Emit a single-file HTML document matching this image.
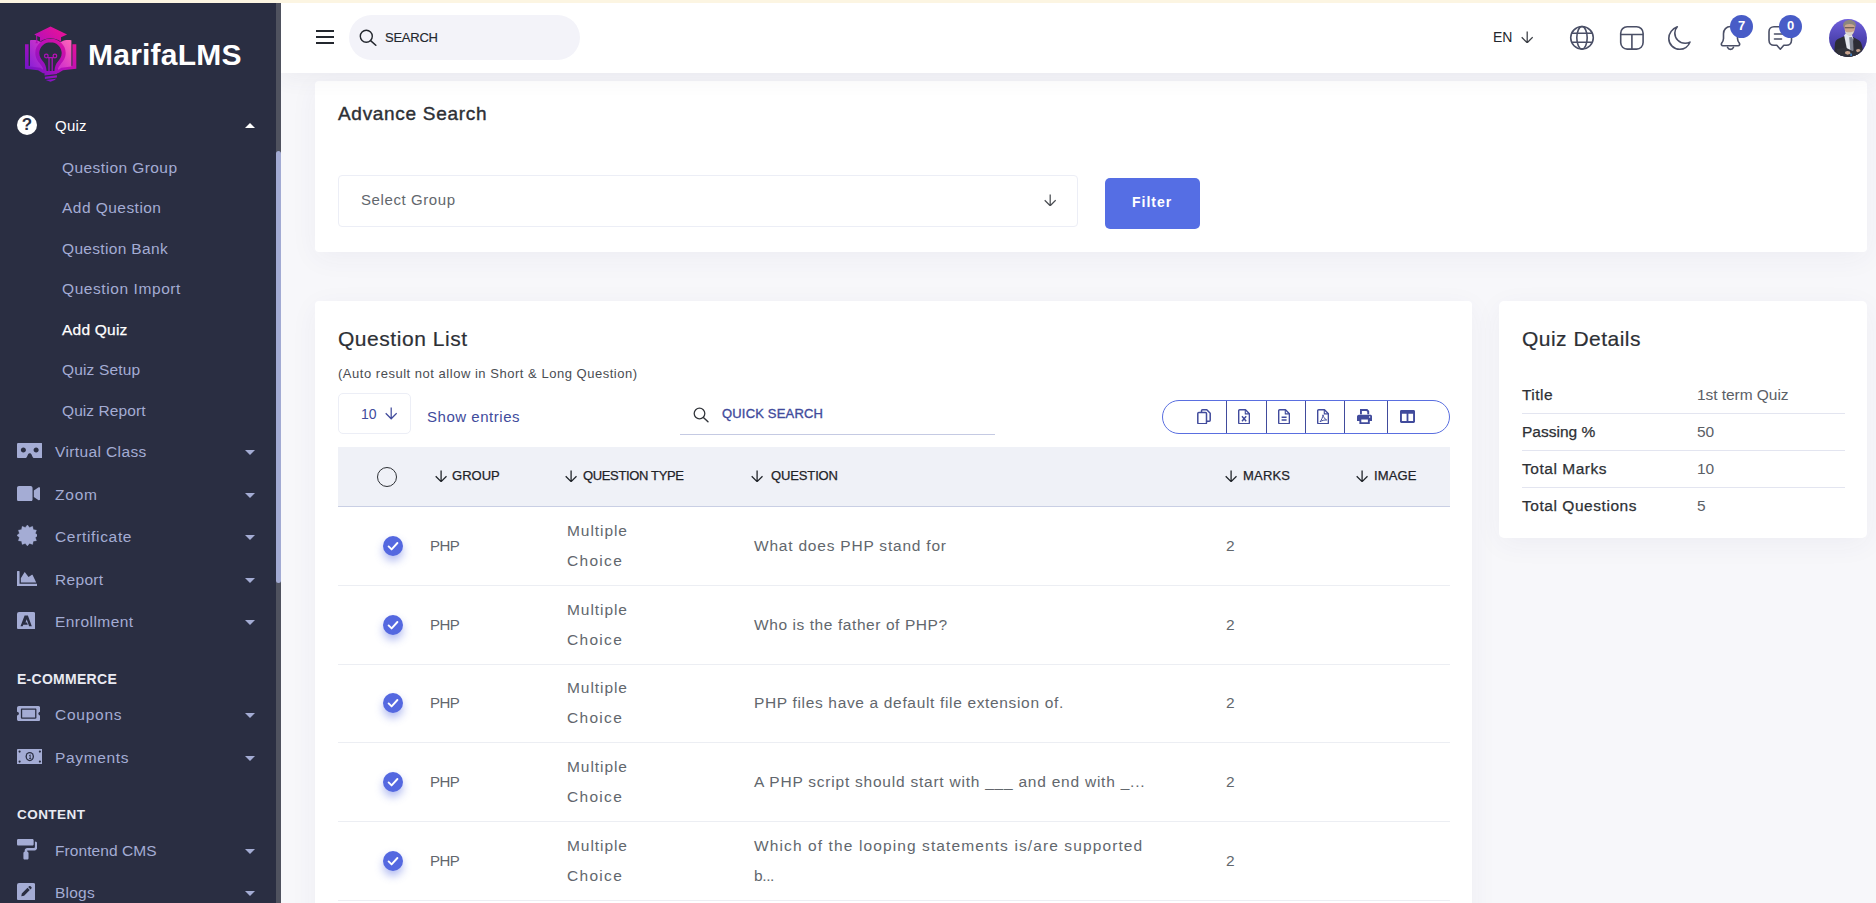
<!DOCTYPE html>
<html lang="en"><head><meta charset="utf-8"><title>Add Quiz</title>
<style>
*{box-sizing:border-box;margin:0;padding:0}
html,body{width:1876px;height:903px;overflow:hidden}
body{font-family:"Liberation Sans",sans-serif;background:#f7f7fa;color:#2d3035;position:relative}
.abs{position:absolute}
.t{position:absolute;white-space:nowrap;line-height:1}
#strip{left:0;top:0;width:1876px;height:3px;background:#fcf5e2;z-index:9}
#side{left:0;top:3px;width:276px;height:900px;background:#2a2e42;z-index:7}
#sbtrack,#sbthumb{z-index:7}
#sidebar{position:absolute;left:0;top:0;z-index:8}
#sbtrack{left:276px;top:3px;width:5px;height:900px;background:#4f525f}
#sbthumb{left:276px;top:151px;width:5px;height:432px;background:#a2aad3;border-radius:3px}
#top{left:281px;top:3px;width:1595px;height:70px;background:#fff;z-index:5;box-shadow:0 6px 20px rgba(60,60,95,.06)}
#topbar{position:absolute;left:0;top:0;z-index:6}
#topshadow{display:none}
.side-t{color:#a4acd4;font-size:15.5px}
.caret{position:absolute;width:0;height:0;border-left:5px solid transparent;border-right:5px solid transparent;border-top:5px solid #a4acd4;left:245px}
.card{position:absolute;background:#fff;border-radius:4px;box-shadow:0 6px 28px rgba(60,60,110,.05)}
.lt{color:#62676d}
.rt{font-size:15.5px}
.row-sep{position:absolute;left:338px;width:1112px;height:1px;background:#eceef3}
.chk{position:absolute;left:383px;width:20px;height:20px;border-radius:50%;background:#5468e0;box-shadow:0 5px 9px rgba(84,104,224,.45)}
.th{font-size:13px;color:#1f2328;-webkit-text-stroke:0.25px #1f2328}
.qd-l{font-size:15.5px;color:#2d3035;-webkit-text-stroke:0.25px #2d3035;left:1522px}
.qd-v{font-size:15.5px;color:#5b6066;left:1697px}
.qd-sep{position:absolute;left:1522px;width:323px;height:1px;background:#e3e5f0}
</style><style id="fit">
#brand{letter-spacing:0.23px}
#s-quiz{letter-spacing:0.22px}
#s1{letter-spacing:0.43px}
#s2{letter-spacing:0.46px}
#s3{letter-spacing:0.33px}
#s4{letter-spacing:0.58px}
#s5{letter-spacing:0.23px}
#s6{letter-spacing:0.15px}
#s7{letter-spacing:0.08px}
#m1{letter-spacing:0.38px}
#m2{letter-spacing:0.79px}
#m3{letter-spacing:0.67px}
#m4{letter-spacing:0.33px}
#m5{letter-spacing:0.45px}
#h1{letter-spacing:0.28px}
#m6{letter-spacing:0.74px}
#m7{letter-spacing:0.65px}
#h2{letter-spacing:0.45px}
#m8{letter-spacing:0.08px}
#m9{letter-spacing:0.23px}
#tsearch{letter-spacing:-0.24px}
#ten{letter-spacing:0px}
#adv{letter-spacing:0.7px}
#selg{letter-spacing:0.59px}
#filt{letter-spacing:1.07px}
#ql{letter-spacing:0.54px}
#auto{letter-spacing:0.52px}
#ten10{letter-spacing:0px}
#showe{letter-spacing:0.53px}
#qs{letter-spacing:0.18px}
#th1{letter-spacing:0.02px}
#th2{letter-spacing:-0.35px}
#th3{letter-spacing:-0.13px}
#th4{letter-spacing:0.19px}
#th5{letter-spacing:0.15px}
#qd{letter-spacing:0.48px}
#ql1{letter-spacing:0.47px}
#ql2{letter-spacing:-0.0px}
#ql3{letter-spacing:0.53px}
#ql4{letter-spacing:0.55px}
#qv1{letter-spacing:-0.05px}
#qv2{letter-spacing:0px}
#qv3{letter-spacing:0px}
#qv4{letter-spacing:0px}
#r1q{letter-spacing:0.79px}
#r2q{letter-spacing:0.58px}
#r3q{letter-spacing:0.66px}
#r4q{letter-spacing:0.77px}
#r5q{letter-spacing:1.11px}
#r5q2{letter-spacing:-0.38px}
#r1g{letter-spacing:-0.6px}
#r1t1{letter-spacing:0.94px}
#r1t2{letter-spacing:1.3px}
#r1m{letter-spacing:0px}
#r2g{letter-spacing:-0.6px}
#r2t1{letter-spacing:0.94px}
#r2t2{letter-spacing:1.3px}
#r2m{letter-spacing:0px}
#r3g{letter-spacing:-0.6px}
#r3t1{letter-spacing:0.94px}
#r3t2{letter-spacing:1.3px}
#r3m{letter-spacing:0px}
#r4g{letter-spacing:-0.6px}
#r4t1{letter-spacing:0.94px}
#r4t2{letter-spacing:1.3px}
#r4m{letter-spacing:0px}
#r5g{letter-spacing:-0.6px}
#r5t1{letter-spacing:0.94px}
#r5t2{letter-spacing:1.3px}
#r5m{letter-spacing:0px}
</style></head><body>
<div id="strip" class="abs"></div>
<div id="side" class="abs"></div>
<div id="sbtrack" class="abs"></div>
<div id="sbthumb" class="abs"></div>
<div id="top" class="abs"></div>
<div id="topshadow" class="abs"></div>

<!-- SIDEBAR -->
<div id="sidebar">
<!--LOGO-->
<svg class="abs" style="left:24px;top:25px" width="54" height="58" viewBox="24 25 54 58" ><defs><linearGradient id="lg" gradientUnits="userSpaceOnUse" x1="28" y1="74" x2="72" y2="30"><stop offset="0" stop-color="#6f14c9"/><stop offset="0.5" stop-color="#b80fb8"/><stop offset="1" stop-color="#f5138f"/></linearGradient>
<linearGradient id="lg2" gradientUnits="userSpaceOnUse" x1="30" y1="68" x2="70" y2="38"><stop offset="0" stop-color="#8a1fd6"/><stop offset="0.55" stop-color="#d738c8"/><stop offset="1" stop-color="#ff66b8"/></linearGradient></defs>
<path fill="url(#lg)" d="M25 44.300h3.600v21.500l11 1.300 5 3h11.800l5-3 11-1.300V44.300H76.300v24.500L63 70.300l-5 3H43l-5-3-13-1.500z"/>
<path fill="url(#lg2)" d="M30 40.300c3.500-.6 7-.3 9.500 1.200l4 1.500v27l-3.500-2.200-10-1.300zM71.400 40.300c-3.500-.6-7-.3-9.500 1.200l-4 1.500v27l3.500-2.200 10-1.300z"/>
<path fill="url(#lg)" d="M34.200 34.400L50.500 26.600 67.100 34.400 61 37.300v4.500c-2.800-2.300-6.400-3.600-10.500-3.600s-7.700 1.300-10.500 3.600v-4.500l-2.800-1.300v5.300l.9 2h-2.800l.9-2v-5.800z"/>
<path fill="url(#lg)" d="M50.500 38.500c-8.300 0-15.200 6.500-15.200 14.500 0 5.200 2.700 8.300 5 11.200 1.900 2.400 3.200 4.500 3.500 7.800h13.400c.3-3.300 1.600-5.400 3.500-7.800 2.300-2.900 5-6 5-11.200 0-8-6.900-14.500-15.200-14.500z"/>
<path fill="#2a2e42" d="M50.500 42.200c-6.200 0-11.200 4.900-11.200 10.900 0 3.900 2.200 6.400 4 8.700 1.600 2 2.900 4.500 3.300 9.200h7.800c.4-4.700 1.700-7.200 3.300-9.200 1.800-2.300 4-4.800 4-8.700 0-6-5-10.900-11.200-10.900z"/>
<g fill="none" stroke="url(#lg)" stroke-width="1.250"><circle cx="46.300" cy="56" r="1.800"/><circle cx="54.900" cy="56" r="1.800"/><path d="M47.500 57.600h6.200M49 57.600V71.500M52.200 57.600V71.500"/></g>
<path fill="url(#lg)" d="M44.500 72h12.400v2.100l-12.400 1.500zM44.900 76.700l12-1.500v2.300l-12 1.500zM45.800 80l10.300-1.300-1.300 1.300-4.300 1.800-3.500-1.300z"/></svg>
<!--/LOGO-->
<span class="t" id="brand" style="left:88px;top:40px;font-size:30px;font-weight:bold;color:#fff">MarifaLMS</span>
<span class="t" id="s-quiz" style="left:55px;top:118px;font-size:15px;color:#fff">Quiz</span>
<span class="t side-t" id="s1" style="left:62px;top:160px">Question Group</span>
<span class="t side-t" id="s2" style="left:62px;top:200px">Add Question</span>
<span class="t side-t" id="s3" style="left:62px;top:241px">Question Bank</span>
<span class="t side-t" id="s4" style="left:62px;top:281px">Question Import</span>
<span class="t side-t" id="s5" style="left:62px;top:322px;color:#fff;-webkit-text-stroke:0.25px #fff">Add Quiz</span>
<span class="t side-t" id="s6" style="left:62px;top:362px">Quiz Setup</span>
<span class="t side-t" id="s7" style="left:62px;top:403px">Quiz Report</span>
<span class="t side-t" id="m1" style="left:55px;top:444px">Virtual Class</span>
<span class="t side-t" id="m2" style="left:55px;top:487px">Zoom</span>
<span class="t side-t" id="m3" style="left:55px;top:529px">Certificate</span>
<span class="t side-t" id="m4" style="left:55px;top:572px">Report</span>
<span class="t side-t" id="m5" style="left:55px;top:614px">Enrollment</span>
<span class="t" id="h1" style="left:17px;top:672px;font-size:14px;font-weight:bold;color:#e9eaf2">E-COMMERCE</span>
<span class="t side-t" id="m6" style="left:55px;top:707px">Coupons</span>
<span class="t side-t" id="m7" style="left:55px;top:750px">Payments</span>
<span class="t" id="h2" style="left:17px;top:808px;font-size:13.5px;font-weight:bold;color:#e9eaf2">CONTENT</span>
<span class="t side-t" id="m8" style="left:55px;top:843px">Frontend CMS</span>
<span class="t side-t" id="m9" style="left:55px;top:885px">Blogs</span>
<i class="caret" style="top:123px;border-top:0;border-bottom:5px solid #fff"></i>
<i class="caret" style="top:450px"></i>
<i class="caret" style="top:493px"></i>
<i class="caret" style="top:535px"></i>
<i class="caret" style="top:578px"></i>
<i class="caret" style="top:620px"></i>
<i class="caret" style="top:713px"></i>
<i class="caret" style="top:756px"></i>
<i class="caret" style="top:849px"></i>
<i class="caret" style="top:891px"></i>
<!--SIDEICONS-->
<div class="abs" style="left:17px;top:114.5px;width:20px;height:20px;border-radius:50%;background:#fff"></div><span class="t" style="left:17px;top:116px;width:20px;text-align:center;font-size:17px;font-weight:bold;color:#2a2e42">?</span>
<svg class="abs" style="left:16.75px;top:443px" width="25.5" height="15.3" viewBox="0 64 640 384" preserveAspectRatio="none"><path fill="#a4acd4" d="M608 64H32C14.33 64 0 78.33 0 96v320c0 17.67 14.33 32 32 32h160.22c25.19 0 48.03-14.77 58.36-37.74l27.74-61.64C286.21 331.08 302.35 320 320 320s33.79 11.08 41.68 28.62l27.74 61.64C399.75 433.23 422.6 448 447.78 448H608c17.67 0 32-14.33 32-32V96c0-17.67-14.33-32-32-32zM160 304c-35.35 0-64-28.650-64-64s28.650-64 64-64 64 28.650 64 64-28.650 64-64 64zm320 0c-35.35 0-64-28.650-64-64s28.650-64 64-64 64 28.650 64 64-28.650 64-64 64z"/></svg>
<svg class="abs" style="left:16.75px;top:485.5px" width="23.3" height="15.5" viewBox="0 64 576 384" preserveAspectRatio="none"><path fill="#a4acd4" d="M336.2 64H47.8C21.4 64 0 85.4 0 111.8v288.4C0 426.6 21.4 448 47.8 448h288.4c26.4 0 47.8-21.4 47.8-47.8V111.8c0-26.4-21.4-47.8-47.8-47.8zm189.4 37.7L416 177.3v157.4l109.600 75.500c21.2 14.6 50.4-.3 50.4-25.8V127.5c0-25.4-29.1-40.4-50.4-25.8z"/></svg>
<svg class="abs" style="left:16.7px;top:525.1px" width="20.8" height="20.8" viewBox="0 0 20.8 20.8" ><polygon fill="#a4acd4" stroke="#a4acd4" stroke-width="0.3" stroke-linejoin="round" points="10.40,-0.10 12.55,2.38 15.65,1.31 16.27,4.53 19.49,5.15 18.42,8.25 20.90,10.40 18.42,12.55 19.49,15.65 16.27,16.27 15.65,19.49 12.55,18.42 10.40,20.90 8.25,18.42 5.15,19.49 4.53,16.27 1.31,15.65 2.38,12.55 -0.10,10.40 2.38,8.25 1.31,5.15 4.53,4.53 5.15,1.31 8.25,2.38"/></svg>
<svg class="abs" style="left:16.75px;top:570.8px" width="20.5" height="15.4" viewBox="0 64 512 384" preserveAspectRatio="none"><path fill="#a4acd4" d="M500 384c6.6 0 12 5.4 12 12v40c0 6.6-5.4 12-12 12H12c-6.6 0-12-5.4-12-12V76c0-6.600 5.400-12 12-12h40c6.6 0 12 5.4 12 12v308h436zM372.7 159.5L288 216l-85.3-113.7c-5.1-6.8-15.5-6.3-19.9 1L96 248v104h384l-89.900-187.800c-3.2-6.5-11.4-8.7-17.4-4.7z"/></svg>
<svg class="abs" style="left:16.75px;top:611.7px" width="18.3" height="17.4" viewBox="0 0 18.3 17.4" ><rect width="18.3" height="17.4" rx="2" fill="#a4acd4"/><path fill="#2a2e42" d="M7.6 3.6h3.3l3.9 10.6h-2.7l-2.4-6.9-1.2 3.3h1.5l.8 2.1H6.300l-.6 1.5H3.500z"/></svg>
<svg class="abs" style="left:16.75px;top:706px" width="23.3" height="15.2" viewBox="0 64 576 384" preserveAspectRatio="none"><path fill="#a4acd4" d="M128 160h320v192H128V160zm400 96c0 26.51 21.49 48 48 48v96c0 26.51-21.49 48-48 48H48c-26.51 0-48-21.49-48-48v-96c26.51 0 48-21.49 48-48s-21.49-48-48-48v-96c0-26.51 21.49-48 48-48h480c26.51 0 48 21.49 48 48v96c-26.51 0-48 21.49-48 48zm-48-104c0-13.255-10.745-24-24-24H120c-13.255 0-24 10.745-24 24v208c0 13.255 10.745 24 24 24h336c13.255 0 24-10.745 24-24V152z"/></svg>
<svg class="abs" style="left:16.75px;top:749px" width="25.5" height="15.2" viewBox="0 0 25.5 15.2" ><rect width="25.5" height="15.2" rx="0.8" fill="#a4acd4"/><circle cx="2.6" cy="2.6" r="1.1" fill="#2a2e42"/><circle cx="22.9" cy="2.6" r="1.1" fill="#2a2e42"/><circle cx="2.6" cy="12.6" r="1.1" fill="#2a2e42"/><circle cx="22.9" cy="12.6" r="1.1" fill="#2a2e42"/><ellipse cx="12.75" cy="7.6" rx="4.2" ry="4.6" fill="#2a2e42"/><ellipse cx="12.75" cy="7.6" rx="2.9" ry="3.3" fill="#a4acd4"/><path d="M12.1 6.3l1-.7h.5v3.600h.7v.8h-2.300v-.8h.7V6.700l-.6.300z" fill="#2a2e42"/></svg>
<svg class="abs" style="left:16.75px;top:839.2px" width="20.5" height="20.6" viewBox="0 0 512 512" preserveAspectRatio="none"><path fill="#a4acd4" d="M416 128V32c0-17.67-14.33-32-32-32H32C14.33 0 0 14.33 0 32v96c0 17.67 14.33 32 32 32h352c17.67 0 32-14.33 32-32zm32-64v128c0 17.67-14.33 32-32 32H256c-35.35 0-64 28.650-64 64v32c-17.67 0-32 14.33-32 32v128c0 17.67 14.33 32 32 32h64c17.67 0 32-14.33 32-32V352c0-17.67-14.33-32-32-32v-32h160c53.02 0 96-42.98 96-96v-64c0-35.35-28.650-64-64-64z"/></svg>
<svg class="abs" style="left:16.7px;top:882.8px" width="18.3" height="17.4" viewBox="0 0 18.3 17.4" ><rect width="18.3" height="17.4" rx="2" fill="#a4acd4"/><path fill="#2a2e42" d="M4.300 13.300l.5-2.800 5.700-5.700 2.300 2.300-5.700 5.700zM11.200 4.100l.9-.9c.4-.4 1-.4 1.400 0l.9.900c.4.4.4 1 0 1.400l-.9.900z"/></svg>
<!--/SIDEICONS-->
</div>

<!-- TOPBAR -->
<div id="topbar">
<div class="abs" style="left:316px;top:30px;width:18px;height:2px;background:#23272e;box-shadow:0 6px 0 #23272e,0 12px 0 #23272e"></div>
<div class="abs" style="left:349px;top:15px;width:231px;height:45px;border-radius:23px;background:#f3f3f9"></div>
<span class="t" id="tsearch" style="left:385px;top:31px;font-size:13px;color:#23272e;-webkit-text-stroke:0.15px #23272e">SEARCH</span>
<span class="t" id="ten" style="left:1493px;top:30px;font-size:14px;color:#23272e">EN</span>
<!--TOPICONS-->
<svg class="abs" style="left:359px;top:28.5px" width="18" height="17" viewBox="0 0 18 17" ><circle cx="7.300" cy="7.300" r="6" fill="none" stroke="#23272e" stroke-width="1.400"/><path d="M11.600 11.600l5.200 4.600" stroke="#23272e" stroke-width="1.500" stroke-linecap="round"/></svg>
<svg class="abs" style="left:1520.6px;top:30.6px" width="12.4" height="12.4" viewBox="0 0 12.4 12.4" ><path d="M6.200 0.400v11.200M0.700 6.300l5.500 5.500 5.500-5.500" fill="none" stroke="#3a3d44" stroke-width="1.25"/></svg>
<svg class="abs" style="left:1568.5px;top:24.5px" width="26" height="26" viewBox="0 0 26 26" ><g fill="none" stroke="#4a4f66" stroke-width="1.600"><circle cx="13" cy="12.800" r="11.300"/><ellipse cx="13" cy="12.800" rx="5.200" ry="11.300"/><path d="M2.600 8.300h20.800M2.600 17.300h20.800"/></g></svg>
<svg class="abs" style="left:1618.5px;top:24.5px" width="26" height="26" viewBox="0 0 26 26" ><g fill="none" stroke="#4a4f66" stroke-width="1.600"><rect x="1.700" y="1.700" width="22.400" height="22.400" rx="6.500"/><path d="M1.700 9.500h22.400M12.900 9.500v14.600"/></g></svg>
<svg class="abs" style="left:1667px;top:24.5px" width="26" height="26" viewBox="0 0 26 26" ><path fill="none" stroke="#4a4f66" stroke-width="1.600" stroke-linejoin="round" d="M10.300 1.800C5.200 3.600 1.800 8.300 1.800 13.400c0 6 4.900 10.900 10.900 10.900 4.700 0 8.800-3 10.300-7.200-1.500.8-3.200 1.200-4.900 1.200-5.700 0-10.300-4.600-10.300-10.300 0-2.300.9-4.500 2.500-6.200z"/></svg>
<svg class="abs" style="left:1719px;top:24.5px" width="24" height="26" viewBox="0 0 24 26" ><g fill="none" stroke="#4a4f66" stroke-width="1.600" stroke-linejoin="round" stroke-linecap="round"><path d="M11.500 1.500c-4.200 0-7 3.200-7 7.200v4.800c0 1.800-.8 3.300-1.900 4.700-.8 1 0 2.500 1.300 2.500h15.200c1.300 0 2.100-1.500 1.300-2.500-1.100-1.400-1.900-2.900-1.900-4.700V8.700c0-4-2.800-7.200-7-7.200z"/><path d="M8.500 22.300c.5 1.300 1.700 2.100 3 2.100s2.500-.8 3-2.100"/></g></svg>
<svg class="abs" style="left:1766.5px;top:24.5px" width="26" height="26" viewBox="0 0 26 26" ><g fill="none" stroke="#4a4f66" stroke-width="1.600" stroke-linejoin="round" stroke-linecap="round"><path d="M7 1.700h12.500c2.900 0 5 2.100 5 5v8.600c0 2.900-2.100 5-5 5h-2.700l-3.500 3.900-3.500-3.900H7c-2.900 0-5-2.100-5-5V6.700c0-2.900 2.100-5 5-5z"/><path d="M7.500 9h9.500M7.500 14h7"/></g></svg>
<svg class="abs" style="left:1829px;top:19px" width="38" height="38" viewBox="0 0 38 38" ><defs><linearGradient id="av" x1="0" y1="0" x2="0" y2="1"><stop offset="0" stop-color="#7060dc"/><stop offset="0.55" stop-color="#4d43b0"/><stop offset="1" stop-color="#352d8e"/></linearGradient><clipPath id="avc"><circle cx="19" cy="19" r="19"/></clipPath></defs>
<g clip-path="url(#avc)"><rect width="38" height="38" fill="url(#av)"/>
<path fill="#2c2d35" d="M6 24c.5-2.500 2-3.800 4.500-4.700l5-2.300 2.500 6 4.500 1.500 1.500-6.500 5.500 3c2 1.200 3 3 3.500 6l1.500 7-10 5.500-19.500-2z"/>
<path fill="#e4e7ee" d="M15.200 16.500l1.300-2 6.500 1.500 1.300 3.500-1 9.500-1.800 6-3-2z"/>
<path fill="#7c8290" d="M20.200 18.300l2.800-.3 1 2.300.7 13.500-1.500 2.500-1.700-2.300z"/>
<path fill="#c9a48e" d="M15.300 6.500c0-3 2.200-4.700 5.200-4.700s5.700 1.700 5.700 5c0 2.500-.5 5.500-1.800 7.500-1 1.500-2.300 2.300-3.700 2.300-1.500 0-3-1-4-3-1-2-1.400-4.800-1.400-7.100z"/>
<path fill="#8b867e" d="M14.200 7.500c-.6-3.800 2-6.600 6.300-6.600 4.200 0 6.800 2.400 6.300 6.300l-.8 1.300c-.2-2.400-1.700-3.600-5.500-3.600-3.300 0-5 1-5.500 3.800z"/>
<path fill="#d9d6d2" d="M15.800 11.800c.8 1 2 1.500 4.700 1.500 2 0 3.300-.5 4.200-1.500-.3 2.800-1.700 4.800-4.200 4.800s-4.200-2-4.700-4.800z"/>
<path fill="#3a3434" d="M15.800 8.300h9.600v1h-9.600z" opacity=".8"/>
<path fill="#32333b" d="M7.500 30l9-1.500 7 3.500 6.500-3.500 3.500 1-2 5-9 4.500-13-2.500z"/>
<path fill="#c9a48e" d="M16.500 32.500c1-.8 3-.8 4.300 0l1 2.200-3.500 1-2.500-1.500zM27.500 30.500c1-.8 2.500-.8 3.500 0l.5 1.500-3 1.300-1.500-1.300z"/>
<path fill="#3f7fc4" d="M21.300 34.500h1.600v2.600h-1.600z"/></g></svg>
<!--/TOPICONS-->
<div class="abs" style="left:1730px;top:15px;width:23px;height:23px;border-radius:50%;background:#485cc7"></div>
<div class="abs" style="left:1779px;top:15px;width:23px;height:23px;border-radius:50%;background:#485cc7"></div>
<span class="t" style="left:1730px;top:19px;width:23px;text-align:center;font-size:13px;font-weight:bold;color:#fff">7</span>
<span class="t" style="left:1779px;top:19px;width:23px;text-align:center;font-size:13px;font-weight:bold;color:#fff">0</span>
</div>

<!-- ADVANCE SEARCH CARD -->
<div class="card" style="left:315px;top:81px;width:1552px;height:171px"></div>
<span class="t" id="adv" style="left:338px;top:104px;font-size:19px;-webkit-text-stroke:0.4px #2d3035;color:#2d3035">Advance Search</span>
<div class="abs" style="left:338px;top:175px;width:740px;height:52px;border:1px solid #eceef6;border-radius:4px;background:#fff"></div>
<span class="t lt" id="selg" style="left:361px;top:192px;font-size:15px">Select Group</span>
<div class="abs" style="left:1105px;top:178px;width:95px;height:51px;border-radius:5px;background:#556ee4"></div>
<span class="t" id="filt" style="left:1132px;top:195px;font-size:14px;font-weight:bold;color:#fff;letter-spacing:1px">Filter</span>

<!-- QUESTION LIST CARD -->
<div class="card" style="left:315px;top:301px;width:1157px;height:640px"></div>
<span class="t" id="ql" style="left:338px;top:328px;font-size:21px;color:#2d3035;-webkit-text-stroke:0.2px #2d3035">Question List</span>
<span class="t" id="auto" style="left:338px;top:367px;font-size:13px;color:#4a4d52">(Auto result not allow in Short &amp; Long Question)</span>
<div class="abs" style="left:338px;top:393px;width:73px;height:41px;border:1px solid #eceef6;border-radius:5px;background:#fff"></div>
<span class="t" id="ten10" style="left:361px;top:407px;font-size:14px;color:#414b9c">10</span>
<span class="t" id="showe" style="left:427px;top:409px;font-size:15px;color:#414b9c">Show entries</span>
<span class="t" id="qs" style="left:722px;top:407px;font-size:13px;color:#414b9c;-webkit-text-stroke:0.35px #414b9c">QUICK SEARCH</span>
<div class="abs" style="left:680px;top:434px;width:315px;height:1px;background:#c5cae3"></div>
<div class="abs" style="left:1162px;top:400px;width:288px;height:34px;border:1px solid #5a6fe0;border-radius:17px"></div>
<div class="abs" style="left:1226px;top:401px;width:1px;height:32px;background:#414b9c;box-shadow:40px 0 0 #414b9c,79px 0 0 #414b9c,118px 0 0 #414b9c,161px 0 0 #414b9c"></div>
<div class="abs" style="left:338px;top:447px;width:1112px;height:60px;background:#eff1f7;border-bottom:1px solid #c9cfe4"></div>
<!--BTNICONS-->
<svg class="abs" style="left:1197px;top:408.5px" width="14" height="15.5" viewBox="0 0 14 15.500" ><g fill="none" stroke="#414b9c" stroke-width="1.500" stroke-linejoin="round"><path d="M4.500 3.200V1.800c0-.6.400-1 1-1h4.300l3.400 3.400v7c0 .6-.4 1-1 1H9.500"/><rect x="0.800" y="3.500" width="8.700" height="11.200" rx="1"/></g></svg>
<svg class="abs" style="left:1238px;top:408.5px" width="12.2" height="15.5" viewBox="0 0 12.200 15.500" ><g fill="none" stroke="#414b9c" stroke-width="1.400" stroke-linejoin="round"><path d="M1.700.8h5.800l3.900 3.900v9c0 .6-.4 1-1 1H1.700c-.6 0-1-.4-1-1V1.800c0-.6.400-1 1-1z"/><path d="M7.300 1v3.900h4" stroke-width="1.100"/><path d="M4 7.300l4.200 5M8.200 7.300l-4.200 5" stroke-width="1.500"/></g></svg>
<svg class="abs" style="left:1277.5px;top:408.5px" width="12.2" height="15.5" viewBox="0 0 12.200 15.500" ><g fill="none" stroke="#414b9c" stroke-width="1.400" stroke-linejoin="round"><path d="M1.700.8h5.800l3.900 3.900v9c0 .6-.4 1-1 1H1.700c-.6 0-1-.4-1-1V1.800c0-.6.400-1 1-1z"/><path d="M7.300 1v3.900h4" stroke-width="1.100"/><path d="M3.600 8.300h5M3.600 11h5" stroke-width="1.400"/></g></svg>
<svg class="abs" style="left:1317px;top:408.5px" width="12.2" height="15.5" viewBox="0 0 12.200 15.500" ><g fill="none" stroke="#414b9c" stroke-width="1.400" stroke-linejoin="round"><path d="M1.700.8h5.800l3.900 3.900v9c0 .6-.4 1-1 1H1.700c-.6 0-1-.4-1-1V1.800c0-.6.400-1 1-1z"/><path d="M7.300 1v3.900h4" stroke-width="1.100"/><path d="M6 5.800c.6 2.200 1.500 4.200 3.700 5.200-2.300-.2-4.600.5-6.600 1.700 1.600-2 2.600-4.300 2.900-6.900z" stroke-width="1"/></g></svg>
<svg class="abs" style="left:1356.5px;top:409px" width="15.2" height="15.2" viewBox="0 0 15.200 15.200" ><path fill="#414b9c" d="M3 0h7.300l1.900 1.900V5.300H10.300V2.800L9.400 1.900H4.900v3.400H3zM1.900 5.700h11.400c1 0 1.900.9 1.900 1.900v4.300h-2.400V15.200H2.400V11.900H0V7.600c0-1 .9-1.900 1.900-1.900zM4.300 10.500v2.800h6.600v-2.800zM12.600 7.300a.75.75 0 1 0 0 1.500.75.75 0 0 0 0-1.500z"/></svg>
<svg class="abs" style="left:1399.5px;top:410px" width="15" height="13" viewBox="0 0 15 13" ><path fill="#414b9c" d="M1.400 0h12.200c.8 0 1.400.6 1.400 1.400v10.200c0 .8-.6 1.400-1.400 1.400H1.400C.6 13 0 12.400 0 11.600V1.400C0 .6.600 0 1.400 0zM1.900 3.700v7.400h4.700V3.700zm6.500 0v7.400h4.700V3.700z"/></svg>
<svg class="abs" style="left:1043.8px;top:193.6px" width="12.4" height="12.4" viewBox="0 0 12.4 12.4" ><path d="M6.200 0.400v11.200M0.700 6.300l5.500 5.500 5.500-5.500" fill="none" stroke="#4a4d52" stroke-width="1.25"/></svg>
<svg class="abs" style="left:385px;top:407.3px" width="12.4" height="12.4" viewBox="0 0 12.4 12.4" ><path d="M6.200 0.400v11.200M0.700 6.300l5.500 5.500 5.500-5.500" fill="none" stroke="#414b9c" stroke-width="1.25"/></svg>
<svg class="abs" style="left:435px;top:469.6px" width="12.2" height="12.2" viewBox="0 0 12.4 12.4" ><path d="M6.200 0.400v11.200M0.700 6.300l5.500 5.500 5.500-5.500" fill="none" stroke="#1f2328" stroke-width="1.3"/></svg>
<svg class="abs" style="left:565px;top:469.6px" width="12.2" height="12.2" viewBox="0 0 12.4 12.4" ><path d="M6.200 0.400v11.200M0.700 6.300l5.500 5.500 5.500-5.500" fill="none" stroke="#1f2328" stroke-width="1.3"/></svg>
<svg class="abs" style="left:751.2px;top:469.6px" width="12.2" height="12.2" viewBox="0 0 12.4 12.4" ><path d="M6.200 0.400v11.200M0.700 6.300l5.500 5.500 5.500-5.500" fill="none" stroke="#1f2328" stroke-width="1.3"/></svg>
<svg class="abs" style="left:1225px;top:469.6px" width="12.2" height="12.2" viewBox="0 0 12.4 12.4" ><path d="M6.200 0.400v11.200M0.700 6.300l5.500 5.500 5.500-5.500" fill="none" stroke="#1f2328" stroke-width="1.3"/></svg>
<svg class="abs" style="left:1355.5px;top:469.6px" width="12.2" height="12.2" viewBox="0 0 12.4 12.4" ><path d="M6.200 0.400v11.200M0.700 6.300l5.500 5.500 5.500-5.500" fill="none" stroke="#1f2328" stroke-width="1.3"/></svg>
<svg class="abs" style="left:693px;top:407px" width="16" height="16" viewBox="0 0 16 16" ><circle cx="6.500" cy="6.500" r="5.300" fill="none" stroke="#33363c" stroke-width="1.300"/><path d="M10.400 10.400l4.600 4.400" stroke="#33363c" stroke-width="1.400" stroke-linecap="round"/></svg>
<!--/BTNICONS-->
<div class="abs" style="left:377px;top:467px;width:20px;height:20px;border:1px solid #2d3035;border-radius:50%"></div>
<span class="t th" id="th1" style="left:452px;top:469px">GROUP</span>
<span class="t th" id="th2" style="left:583px;top:469px">QUESTION TYPE</span>
<span class="t th" id="th3" style="left:771px;top:469px">QUESTION</span>
<span class="t th" id="th4" style="left:1243px;top:469px">MARKS</span>
<span class="t th" id="th5" style="left:1374px;top:469px">IMAGE</span>
<!--ROWS-->
<div class="chk" style="top:535.5px"></div><svg class="abs" style="left:383px;top:535.5px" width="20" height="20" viewBox="0 0 20 20"><path d="M5.6 10.4l3 3 5.8-6.4" fill="none" stroke="#fff" stroke-width="1.9" stroke-linecap="round" stroke-linejoin="round"/></svg>
<span class="t lt rt" id="r1g" style="left:430px;top:538px;font-size:15px">PHP</span>
<span class="t lt rt" id="r1t1" style="left:567px;top:523px">Multiple</span>
<span class="t lt rt" id="r1t2" style="left:567px;top:553px">Choice</span>
<span class="t lt rt" id="r1q" style="left:754px;top:538px">What does PHP stand for</span>
<span class="t lt rt" id="r1m" style="left:1226px;top:538px">2</span>
<div class="chk" style="top:614.5px"></div><svg class="abs" style="left:383px;top:614.5px" width="20" height="20" viewBox="0 0 20 20"><path d="M5.6 10.4l3 3 5.8-6.4" fill="none" stroke="#fff" stroke-width="1.9" stroke-linecap="round" stroke-linejoin="round"/></svg>
<span class="t lt rt" id="r2g" style="left:430px;top:617px;font-size:15px">PHP</span>
<span class="t lt rt" id="r2t1" style="left:567px;top:602px">Multiple</span>
<span class="t lt rt" id="r2t2" style="left:567px;top:632px">Choice</span>
<span class="t lt rt" id="r2q" style="left:754px;top:617px">Who is the father of PHP?</span>
<span class="t lt rt" id="r2m" style="left:1226px;top:617px">2</span>
<div class="chk" style="top:693px"></div><svg class="abs" style="left:383px;top:693px" width="20" height="20" viewBox="0 0 20 20"><path d="M5.6 10.4l3 3 5.8-6.4" fill="none" stroke="#fff" stroke-width="1.9" stroke-linecap="round" stroke-linejoin="round"/></svg>
<span class="t lt rt" id="r3g" style="left:430px;top:695px;font-size:15px">PHP</span>
<span class="t lt rt" id="r3t1" style="left:567px;top:680px">Multiple</span>
<span class="t lt rt" id="r3t2" style="left:567px;top:710px">Choice</span>
<span class="t lt rt" id="r3q" style="left:754px;top:695px">PHP files have a default file extension of.</span>
<span class="t lt rt" id="r3m" style="left:1226px;top:695px">2</span>
<div class="chk" style="top:772px"></div><svg class="abs" style="left:383px;top:772px" width="20" height="20" viewBox="0 0 20 20"><path d="M5.6 10.4l3 3 5.8-6.4" fill="none" stroke="#fff" stroke-width="1.9" stroke-linecap="round" stroke-linejoin="round"/></svg>
<span class="t lt rt" id="r4g" style="left:430px;top:774px;font-size:15px">PHP</span>
<span class="t lt rt" id="r4t1" style="left:567px;top:759px">Multiple</span>
<span class="t lt rt" id="r4t2" style="left:567px;top:789px">Choice</span>
<span class="t lt rt" id="r4q" style="left:754px;top:774px">A PHP script should start with ___ and end with _...</span>
<span class="t lt rt" id="r4m" style="left:1226px;top:774px">2</span>
<div class="chk" style="top:850.5px"></div><svg class="abs" style="left:383px;top:850.5px" width="20" height="20" viewBox="0 0 20 20"><path d="M5.6 10.4l3 3 5.8-6.4" fill="none" stroke="#fff" stroke-width="1.9" stroke-linecap="round" stroke-linejoin="round"/></svg>
<span class="t lt rt" id="r5g" style="left:430px;top:853px;font-size:15px">PHP</span>
<span class="t lt rt" id="r5t1" style="left:567px;top:838px">Multiple</span>
<span class="t lt rt" id="r5t2" style="left:567px;top:868px">Choice</span>
<span class="t lt rt" id="r5q" style="left:754px;top:838px">Which of the looping statements is/are supported</span>
<span class="t lt rt" id="r5q2" style="left:754px;top:868px">b...</span>
<span class="t lt rt" id="r5m" style="left:1226px;top:853px">2</span>
<div class="row-sep" style="top:585px"></div>
<div class="row-sep" style="top:664px"></div>
<div class="row-sep" style="top:742px"></div>
<div class="row-sep" style="top:821px"></div>
<div class="row-sep" style="top:900px"></div>
<!--/ROWS-->

<!-- QUIZ DETAILS -->
<div class="card" style="left:1499px;top:301px;width:368px;height:237px;border-radius:5px"></div>
<span class="t" id="qd" style="left:1522px;top:328px;font-size:21px;color:#2d3035;-webkit-text-stroke:0.2px #2d3035">Quiz Details</span>
<span class="t qd-l" id="ql1" style="top:387px">Title</span>
<span class="t qd-l" id="ql2" style="top:424px">Passing %</span>
<span class="t qd-l" id="ql3" style="top:461px">Total Marks</span>
<span class="t qd-l" id="ql4" style="top:498px">Total Questions</span>
<span class="t qd-v" id="qv1" style="top:387px">1st term Quiz</span>
<span class="t qd-v" id="qv2" style="top:424px">50</span>
<span class="t qd-v" id="qv3" style="top:461px">10</span>
<span class="t qd-v" id="qv4" style="top:498px">5</span>
<div class="qd-sep" style="top:413px"></div>
<div class="qd-sep" style="top:450px"></div>
<div class="qd-sep" style="top:487px"></div>
</body></html>
